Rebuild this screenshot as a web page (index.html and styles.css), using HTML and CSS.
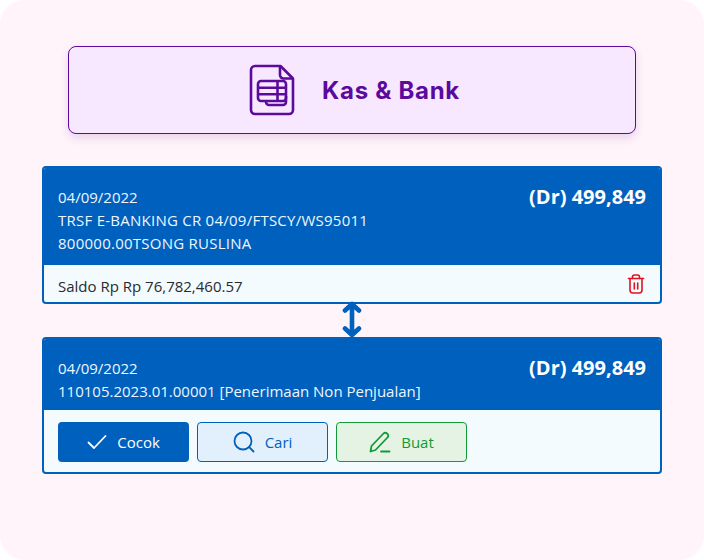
FILE: index.html
```html
<!DOCTYPE html>
<html>
<head>
	<title>Kas &amp; Bank</title>
	<link rel="stylesheet" href="styles.css">
</head>
<body>
	<div class="page">
		<div class="title_box">
			<svg class="title_icon" width="46" height="52" viewBox="0 0 46 52" fill="none" stroke="#5c0a9c" stroke-width="2.6" stroke-linejoin="round">
				<path d="M6 2h25.500L44 14.500V46a4 4 0 0 1-4 4H6a4 4 0 0 1-4-4V6a4 4 0 0 1 4-4z"/>
				<path d="M31 2.500V11a3.500 3.500 0 0 0 3.500 3.500H43.500" />
				<rect x="9" y="17" width="28" height="20" rx="3"/>
				<path d="M9 23.700h28M9 30.300h28M28.500 17v20"/>
				<path d="M17 37v1a3 3 0 0 0 3 3h14a3 3 0 0 0 3-3v-6"/>
			</svg>
			<span class="title_text">Kas &amp; Bank</span>
		</div>

		<div class="card">
			<div class="card_head">
				<div class="card_info">
					<div>04/09/2022</div>
					<div class="caps_line">TRSF E-BANKING CR 04/09/FTSCY/WS95011</div>
					<div class="caps_line">800000.00TSONG RUSLINA</div>
				</div>
				<div class="amount">(Dr) 499,849</div>
			</div>
			<div class="card_foot">
				<span class="saldo">Saldo Rp Rp 76,782,460.57</span>
				<svg class="trash" width="18" height="20" viewBox="0 0 18 20" fill="none" stroke="#e0141c" stroke-width="1.6" stroke-linecap="round" stroke-linejoin="round">
					<path d="M1.500 4.500h15"/>
					<path d="M5.500 4.500V3a2 2 0 0 1 2-2h3a2 2 0 0 1 2 2v1.500"/>
					<path d="M3 4.500V16a3 3 0 0 0 3 3h6a3 3 0 0 0 3-3V4.500"/>
					<path d="M7.300 9v6M10.700 9v6"/>
				</svg>
			</div>
		</div>

		<div class="link_row">
			<svg width="20" height="37" viewBox="0 0 20 37" fill="none" stroke="#0060bd" stroke-width="4.600" stroke-linecap="round" stroke-linejoin="round">
				<path d="M10 3v31M3 9.500L10 3l7 6.500M3 27.500L10 34l7-6.500"/>
			</svg>
		</div>

		<div class="card">
			<div class="card_head card_head2">
				<div class="card_info">
					<div>04/09/2022</div>
					<div>110105.2023.01.00001 [Penerimaan Non Penjualan]</div>
				</div>
				<div class="amount">(Dr) 499,849</div>
			</div>
			<div class="btn_row">
				<div class="btn btn_blue">
					<svg width="20" height="16" viewBox="0 0 20 16" fill="none" stroke="#fff" stroke-width="1.800" stroke-linecap="round" stroke-linejoin="round"><path d="M1.500 8.500L7 14 18.500 2"/></svg>
					Cocok
				</div>
				<div class="btn btn_light">
					<svg width="22" height="22" viewBox="0 0 22 22" fill="none" stroke="#0060bd" stroke-width="1.800" stroke-linecap="round"><circle cx="10" cy="10" r="8.500"/><path d="M16.200 16.200L20.500 20.500"/></svg>
					Cari
				</div>
				<div class="btn btn_green">
					<svg width="22" height="22" viewBox="0 0 22 22" fill="none" stroke="#119a35" stroke-width="1.800" stroke-linecap="round" stroke-linejoin="round"><path d="M1.500 20.500l1-5.500L14.500 2.500a2.400 2.400 0 0 1 3.500 0l.5.500a2.400 2.400 0 0 1 0 3.500L6.500 19z"/><path d="M12 20.500h8.500"/></svg>
					Buat
				</div>
			</div>
		</div>
	</div>
</body>
</html>
```

FILE: styles.css
```css
html, body {
	margin: 0;
	background: #ffffff;
}
.page {
	width: 704px;
	height: 560px;
	box-sizing: border-box;
	padding: 46px 42px 0 42px;
	background: #fff4fa;
	border-radius: 24px;
	font-family: "Open Sans", sans-serif;
	overflow: hidden;
}
.title_box {
	display: flex;
	align-items: center;
	justify-content: center;
	gap: 27px;
	box-sizing: border-box;
	height: 88px;
	padding-left: 5px;
	margin: 0 26px 32px 26px;
	background: #f7e8ff;
	border: 1px solid #5c0a9c;
	border-radius: 8px;
	box-shadow: 0 4px 10px rgba(92, 10, 156, 0.14);
}
.title_text {
	font-family: "Inter", sans-serif;
	font-size: 24px;
	font-weight: 700;
	color: #5c0a9c;
	letter-spacing: 0.7px;
}
.card {
	border: 2px solid #0060bd;
	border-radius: 4px;
	background: #f3fbff;
	overflow: hidden;
}
.card_head {
	display: flex;
	justify-content: space-between;
	background: #0060bd;
	color: #eef6ff;
	height: 99px;
	box-sizing: border-box;
	margin: -2px -2px 0 -2px;
	padding: 20px 16px 0 16px;
	font-size: 15px;
	line-height: 23px;
}
.card_head2 {
	height: 73px;
}
.caps_line {
	letter-spacing: 0.25px;
}
.amount {
	font-size: 20px;
	font-weight: 700;
	color: #ffffff;
	line-height: 24px;
	margin-top: -1px;
}
.card_foot {
	display: flex;
	justify-content: space-between;
	align-items: center;
	height: 37px;
	padding: 0 15px 0 14px;
	font-size: 15px;
	color: #2a2a2a;
}
.saldo {
	padding-top: 4px;
}
.link_row {
	display: flex;
	justify-content: center;
	height: 33px;
	overflow: visible;
}
.link_row svg {
	margin-top: -3px;
}
.btn_row {
	display: flex;
	gap: 8px;
	padding: 12px 14px 10px 14px;
	height: 40px;
}
.btn {
	display: flex;
	align-items: center;
	justify-content: center;
	gap: 10px;
	box-sizing: border-box;
	width: 131px;
	height: 40px;
	border-radius: 4px;
	font-size: 15px;
	font-weight: 500;
}
.btn_blue {
	background: #0060bd;
	color: #ffffff;
}
.btn_light {
	background: #e2f0fd;
	border: 1px solid #0060bd;
	color: #0060bd;
}
.btn_green {
	background: #e4f3e4;
	border: 1px solid #119a35;
	color: #119a35;
}
```
